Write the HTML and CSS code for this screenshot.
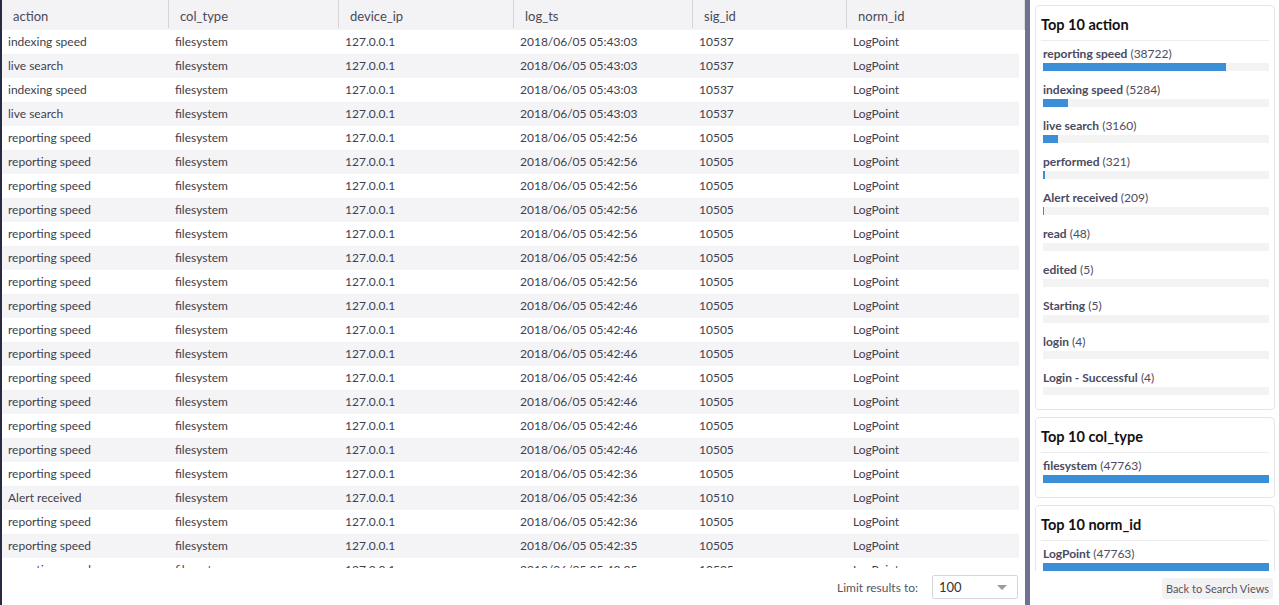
FILE: index.html
```html
<!DOCTYPE html>
<html>
<head>
<meta charset="utf-8">
<link rel="stylesheet" href="styles.css">
</head>
<body>
<div class="app">
  <div class="edge"></div>
  <main class="main">
    <div class="grid">
      <div class="head">
        <div class="hc">action</div>
        <div class="hc">col_type</div>
        <div class="hc">device_ip</div>
        <div class="hc">log_ts</div>
        <div class="hc">sig_id</div>
        <div class="hc last">norm_id</div>
      </div>
      <div class="rows">
        <div class="row"><span>indexing speed</span><span>filesystem</span><span>127.0.0.1</span><span>2018/06/05 05:43:03</span><span>10537</span><span>LogPoint</span></div>
        <div class="row"><span>live search</span><span>filesystem</span><span>127.0.0.1</span><span>2018/06/05 05:43:03</span><span>10537</span><span>LogPoint</span></div>
        <div class="row"><span>indexing speed</span><span>filesystem</span><span>127.0.0.1</span><span>2018/06/05 05:43:03</span><span>10537</span><span>LogPoint</span></div>
        <div class="row"><span>live search</span><span>filesystem</span><span>127.0.0.1</span><span>2018/06/05 05:43:03</span><span>10537</span><span>LogPoint</span></div>
        <div class="row"><span>reporting speed</span><span>filesystem</span><span>127.0.0.1</span><span>2018/06/05 05:42:56</span><span>10505</span><span>LogPoint</span></div>
        <div class="row"><span>reporting speed</span><span>filesystem</span><span>127.0.0.1</span><span>2018/06/05 05:42:56</span><span>10505</span><span>LogPoint</span></div>
        <div class="row"><span>reporting speed</span><span>filesystem</span><span>127.0.0.1</span><span>2018/06/05 05:42:56</span><span>10505</span><span>LogPoint</span></div>
        <div class="row"><span>reporting speed</span><span>filesystem</span><span>127.0.0.1</span><span>2018/06/05 05:42:56</span><span>10505</span><span>LogPoint</span></div>
        <div class="row"><span>reporting speed</span><span>filesystem</span><span>127.0.0.1</span><span>2018/06/05 05:42:56</span><span>10505</span><span>LogPoint</span></div>
        <div class="row"><span>reporting speed</span><span>filesystem</span><span>127.0.0.1</span><span>2018/06/05 05:42:56</span><span>10505</span><span>LogPoint</span></div>
        <div class="row"><span>reporting speed</span><span>filesystem</span><span>127.0.0.1</span><span>2018/06/05 05:42:56</span><span>10505</span><span>LogPoint</span></div>
        <div class="row"><span>reporting speed</span><span>filesystem</span><span>127.0.0.1</span><span>2018/06/05 05:42:46</span><span>10505</span><span>LogPoint</span></div>
        <div class="row"><span>reporting speed</span><span>filesystem</span><span>127.0.0.1</span><span>2018/06/05 05:42:46</span><span>10505</span><span>LogPoint</span></div>
        <div class="row"><span>reporting speed</span><span>filesystem</span><span>127.0.0.1</span><span>2018/06/05 05:42:46</span><span>10505</span><span>LogPoint</span></div>
        <div class="row"><span>reporting speed</span><span>filesystem</span><span>127.0.0.1</span><span>2018/06/05 05:42:46</span><span>10505</span><span>LogPoint</span></div>
        <div class="row"><span>reporting speed</span><span>filesystem</span><span>127.0.0.1</span><span>2018/06/05 05:42:46</span><span>10505</span><span>LogPoint</span></div>
        <div class="row"><span>reporting speed</span><span>filesystem</span><span>127.0.0.1</span><span>2018/06/05 05:42:46</span><span>10505</span><span>LogPoint</span></div>
        <div class="row"><span>reporting speed</span><span>filesystem</span><span>127.0.0.1</span><span>2018/06/05 05:42:46</span><span>10505</span><span>LogPoint</span></div>
        <div class="row"><span>reporting speed</span><span>filesystem</span><span>127.0.0.1</span><span>2018/06/05 05:42:36</span><span>10505</span><span>LogPoint</span></div>
        <div class="row"><span>Alert received</span><span>filesystem</span><span>127.0.0.1</span><span>2018/06/05 05:42:36</span><span>10510</span><span>LogPoint</span></div>
        <div class="row"><span>reporting speed</span><span>filesystem</span><span>127.0.0.1</span><span>2018/06/05 05:42:36</span><span>10505</span><span>LogPoint</span></div>
        <div class="row"><span>reporting speed</span><span>filesystem</span><span>127.0.0.1</span><span>2018/06/05 05:42:35</span><span>10505</span><span>LogPoint</span></div>
        <div class="row"><span>reporting speed</span><span>filesystem</span><span>127.0.0.1</span><span>2018/06/05 05:42:35</span><span>10505</span><span>LogPoint</span></div>
      </div>
    </div>
    <div class="footer">
      <span class="limit-label">Limit results to:</span>
      <div class="select"><span>100</span><span class="caret"></span></div>
    </div>
  </main>
  <div class="divider"></div>
  <aside class="side">
    <div class="side-scroll">
      <section class="card">
        <h3 class="card-title">Top 10 action</h3>
        <ul class="items">
          <li class="item"><div class="label"><b>reporting speed</b> (38722)</div><div class="bar"><div class="fill" style="width:81.07%"></div></div></li>
          <li class="item"><div class="label"><b>indexing speed</b> (5284)</div><div class="bar"><div class="fill" style="width:11.06%"></div></div></li>
          <li class="item"><div class="label"><b>live search</b> (3160)</div><div class="bar"><div class="fill" style="width:6.62%"></div></div></li>
          <li class="item"><div class="label"><b>performed</b> (321)</div><div class="bar"><div class="fill" style="width:0.67%"></div></div></li>
          <li class="item"><div class="label"><b>Alert received</b> (209)</div><div class="bar"><div class="fill" style="width:0.44%"></div></div></li>
          <li class="item"><div class="label"><b>read</b> (48)</div><div class="bar"><div class="fill" style="width:0%"></div></div></li>
          <li class="item"><div class="label"><b>edited</b> (5)</div><div class="bar"><div class="fill" style="width:0%"></div></div></li>
          <li class="item"><div class="label"><b>Starting</b> (5)</div><div class="bar"><div class="fill" style="width:0%"></div></div></li>
          <li class="item"><div class="label"><b>login</b> (4)</div><div class="bar"><div class="fill" style="width:0%"></div></div></li>
          <li class="item"><div class="label"><b>Login - Successful</b> (4)</div><div class="bar"><div class="fill" style="width:0%"></div></div></li>
        </ul>
      </section>
      <section class="card">
        <h3 class="card-title">Top 10 col_type</h3>
        <ul class="items">
          <li class="item"><div class="label"><b>filesystem</b> (47763)</div><div class="bar"><div class="fill" style="width:100%"></div></div></li>
        </ul>
      </section>
      <section class="card">
        <h3 class="card-title">Top 10 norm_id</h3>
        <ul class="items">
          <li class="item"><div class="label"><b>LogPoint</b> (47763)</div><div class="bar"><div class="fill" style="width:100%"></div></div></li>
        </ul>
      </section>
    </div>
    <div class="side-footer">
      <button class="back">Back to Search Views</button>
    </div>
  </aside>
</div>
</body>
</html>
```

FILE: styles.css
```css
html, body {
  margin: 0;
  padding: 0;
  height: 100%;
  overflow: hidden;
  background: #fff;
  font-family: Lato, "Open Sans", sans-serif;
  color: #454552;
}
.app {
  display: flex;
  height: 605px;
  width: 1279px;
}
.edge {
  width: 2px;
  flex: none;
  background: #282c42;
}
.main {
  width: 1023px;
  flex: none;
  display: flex;
  flex-direction: column;
}
.grid {
  height: 568px;
  overflow: hidden;
  flex: none;
}
.head {
  display: grid;
  grid-template-columns: 167px 170px 175px 179px 154px 177px;
  height: 30px;
  background: #f3f3f5;
  border-right: 1px solid #dcdce0;
}
.hc {
  font-size: 13px;
  line-height: 32px;
  padding-left: 11px;
  color: #4a4a58;
  border-right: 1px solid #d2d2d8;
  height: 28px;
  overflow: hidden;
}
.hc.last {
  border-right: none;
}
.rows {
  width: 1017px;
}
.row {
  display: grid;
  grid-template-columns: 167px 170px 175px 179px 154px 172px;
  height: 24px;
  align-items: center;
  font-size: 12px;
  color: #40404c;
}
.row:nth-child(even) {
  background: #f4f4f6;
}
.row span {
  padding-left: 6px;
  padding-bottom: 2px;
  white-space: nowrap;
  overflow: hidden;
}
.footer {
  flex: 1;
  display: flex;
  align-items: center;
  justify-content: flex-end;
  padding-right: 7px;
  padding-top: 1px;
}
.limit-label {
  font-size: 12px;
  color: #555560;
  margin-right: 14px;
}
.select {
  height: 22px;
  border: 1px solid #d6d6dc;
  border-radius: 2px;
  display: flex;
  align-items: center;
  justify-content: space-between;
  padding: 0 10px 0 6px;
  width: 68px;
  font-size: 13px;
  color: #333;
}
.caret {
  width: 0;
  height: 0;
  border-left: 5px solid transparent;
  border-right: 5px solid transparent;
  border-top: 5px solid #9a9aa2;
}
.divider {
  width: 5px;
  flex: none;
  background: #6e7190;
}
.side {
  flex: 1;
  display: flex;
  flex-direction: column;
  padding: 0 4px 0 5px;
}
.side-scroll {
  height: 571px;
  overflow: hidden;
  flex: none;
  padding-top: 5px;
  box-sizing: border-box;
  display: flex;
  flex-direction: column;
  gap: 7px;
}
.card {
  border: 1px solid #e6e6ea;
  border-radius: 4px;
  padding: 9px 5px 3px 5px;
  flex: none;
}
.card-title {
  margin: 0;
  font-size: 14.5px;
  font-weight: 700;
  line-height: 20px;
  color: #111;
  padding-bottom: 5px;
  border-bottom: 1px solid #ececef;
}
.items {
  list-style: none;
  margin: 0;
  padding: 5px 0 0 2px;
}
.item {
  margin-bottom: 11px;
}
.label {
  font-size: 12px;
  line-height: 16px;
  color: #4c4c5e;
}
.label b {
  font-weight: 700;
  color: #4a4a60;
}
.bar {
  margin-top: 1px;
  height: 8px;
  background: #f3f3f4;
}
.fill {
  height: 100%;
  background: #3a8fd6;
}
.side-footer {
  flex: 1;
  display: flex;
  justify-content: flex-end;
  align-items: flex-start;
  padding-top: 7px;
  padding-right: 2px;
}
.back {
  font-family: Lato, "Open Sans", sans-serif;
  font-size: 11px;
  color: #555560;
  background: #f2f2f3;
  border: none;
  border-radius: 3px;
  height: 21px;
  padding: 0 4px;
}
```
